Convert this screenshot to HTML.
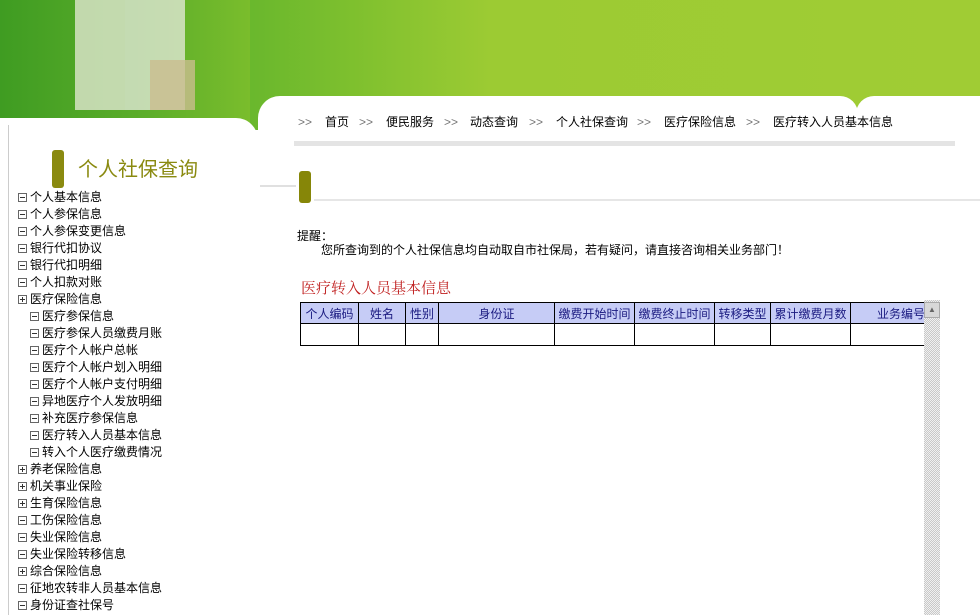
<!DOCTYPE html>
<html><head><meta charset="utf-8"><style>
*{margin:0;padding:0;box-sizing:border-box}
body{width:980px;height:615px;overflow:hidden;background:#fff;position:relative;font-family:"Liberation Sans","Noto Sans CJK SC","WenQuanYi Zen Hei",sans-serif;font-size:12px;color:#000}
.abs{position:absolute}
#banner{left:0;top:0;width:980px;height:130px;background:linear-gradient(90deg,#4fa82a 0%,#5fb32c 20%,#7cbf2e 35%,#9ccb33 50%,#a0cc34 100%)}
.t{white-space:nowrap;line-height:17px}
.bc span{position:absolute;white-space:nowrap;line-height:17px;top:114px}
.bc .g{color:#777}
.menu div{position:absolute;white-space:nowrap;line-height:17px;font-size:12px}
.menu b{display:inline-block;width:9px;height:9px;border:1px solid #666;margin-right:3px;vertical-align:-1px;position:relative;background:#fff}
.menu b:after{content:"";position:absolute;left:1px;top:3px;width:5px;height:1px;background:#333}
.menu b.p:before{content:"";position:absolute;left:3px;top:1px;width:1px;height:5px;background:#333}
table{border-collapse:collapse;position:absolute;left:300px;top:302px;width:625px}
td{border:1px solid #000;height:22px;font-size:12px;text-align:center;white-space:nowrap}
tr.h td{background:#c6ccf6;color:#1a1a80;height:21px}
</style></head><body>
<div id="banner" class="abs"></div>
<div class="abs" style="left:0;top:0;width:250px;height:125px;background:linear-gradient(90deg,#3f9c22,#5dae2a 60%,#7abd2c)"></div>
<div class="abs" style="left:75px;top:0;width:50px;height:110px;background:#dfe6cf;opacity:.8"></div>
<div class="abs" style="left:125px;top:0;width:60px;height:110px;background:#e8ebe0;opacity:.75"></div>
<div class="abs" style="left:150px;top:60px;width:45px;height:50px;background:#c9bd8e;opacity:.8"></div>
<!-- left panel -->
<div class="abs" style="left:0;top:118px;width:258px;height:497px;background:#fff;border-radius:0 22px 0 0"></div>
<div class="abs" style="left:8px;top:125px;width:1px;height:490px;background:#ccc"></div>
<div class="abs" style="left:52px;top:150px;width:12px;height:38px;background:#8a8a10;border-radius:3px"></div>
<div class="abs t" style="left:78px;top:158px;font-size:20px;line-height:24px;color:#8a8a10">个人社保查询</div>
<div class="menu">
<div style="left:18px;top:189px"><b></b>个人基本信息</div>
<div style="left:18px;top:206px"><b></b>个人参保信息</div>
<div style="left:18px;top:223px"><b></b>个人参保变更信息</div>
<div style="left:18px;top:240px"><b></b>银行代扣协议</div>
<div style="left:18px;top:257px"><b></b>银行代扣明细</div>
<div style="left:18px;top:274px"><b></b>个人扣款对账</div>
<div style="left:18px;top:291px"><b class="p"></b>医疗保险信息</div>
<div style="left:30px;top:308px"><b></b>医疗参保信息</div>
<div style="left:30px;top:325px"><b></b>医疗参保人员缴费月账</div>
<div style="left:30px;top:342px"><b></b>医疗个人帐户总帐</div>
<div style="left:30px;top:359px"><b></b>医疗个人帐户划入明细</div>
<div style="left:30px;top:376px"><b></b>医疗个人帐户支付明细</div>
<div style="left:30px;top:393px"><b></b>异地医疗个人发放明细</div>
<div style="left:30px;top:410px"><b></b>补充医疗参保信息</div>
<div style="left:30px;top:427px"><b></b>医疗转入人员基本信息</div>
<div style="left:30px;top:444px"><b></b>转入个人医疗缴费情况</div>
<div style="left:18px;top:461px"><b class="p"></b>养老保险信息</div>
<div style="left:18px;top:478px"><b class="p"></b>机关事业保险</div>
<div style="left:18px;top:495px"><b class="p"></b>生育保险信息</div>
<div style="left:18px;top:512px"><b></b>工伤保险信息</div>
<div style="left:18px;top:529px"><b></b>失业保险信息</div>
<div style="left:18px;top:546px"><b></b>失业保险转移信息</div>
<div style="left:18px;top:563px"><b class="p"></b>综合保险信息</div>
<div style="left:18px;top:580px"><b></b>征地农转非人员基本信息</div>
<div style="left:18px;top:597px"><b></b>身份证查社保号</div>
</div>
<!-- right panel -->
<div class="abs" style="left:258px;top:96px;width:600px;height:519px;background:#fff;border-radius:22px 18px 0 0"></div>
<div class="abs" style="left:856px;top:96px;width:124px;height:519px;background:#fff;border-radius:18px 0 0 0"></div>
<div class="abs" style="left:258px;top:130px;width:722px;height:485px;background:#fff"></div>
<div class="bc">
<span class="g" style="left:298px">&gt;&gt;</span><span style="left:325px">首页</span>
<span class="g" style="left:359px">&gt;&gt;</span><span style="left:386px">便民服务</span>
<span class="g" style="left:444px">&gt;&gt;</span><span style="left:470px">动态查询</span>
<span class="g" style="left:529px">&gt;&gt;</span><span style="left:556px">个人社保查询</span>
<span class="g" style="left:637px">&gt;&gt;</span><span style="left:664px">医疗保险信息</span>
<span class="g" style="left:746px">&gt;&gt;</span><span style="left:773px">医疗转入人员基本信息</span>
</div>
<div class="abs" style="left:294px;top:141px;width:661px;height:5px;background:#e4e4e4"></div>
<div class="abs" style="left:260px;top:185px;width:36px;height:2px;background:#e0e0e0"></div>
<div class="abs" style="left:299px;top:171px;width:12px;height:32px;background:#868608;border-radius:3px"></div>
<div class="abs" style="left:314px;top:199px;width:666px;height:2px;background:#e6e6e6"></div>
<div class="abs t" style="left:297px;top:228px">提醒：</div>
<div class="abs t" style="left:321px;top:242px">您所查询到的个人社保信息均自动取自市社保局，若有疑问，请直接咨询相关业务部门！</div>
<div class="abs t" style="left:301px;top:278px;font-size:15px;line-height:20px;color:#c02020;font-family:'Noto Serif CJK SC','Liberation Serif',serif">医疗转入人员基本信息</div>
<table>
<tr class="h"><td style="width:58px">个人编码</td><td style="width:47px">姓名</td><td style="width:33px">性别</td><td style="width:116px">身份证</td><td style="width:80px">缴费开始时间</td><td style="width:80px">缴费终止时间</td><td style="width:56px">转移类型</td><td style="width:80px">累计缴费月数</td><td style="text-align:right;border-right:none">业务编号</td></tr>
<tr><td></td><td></td><td></td><td></td><td></td><td></td><td></td><td></td><td style="border-right:none"></td></tr>
</table>
<div class="abs" style="left:924px;top:300px;width:16px;height:315px;background:repeating-conic-gradient(#c8c8c8 0 25%,#f0f0f0 0 50%) 0 0/2px 2px"></div>
<div class="abs" style="left:924px;top:302px;width:16px;height:16px;background:#d8d8d8;border:1px solid #aaa;color:#666;font-size:8px;text-align:center;line-height:14px">▲</div>
</body></html>
